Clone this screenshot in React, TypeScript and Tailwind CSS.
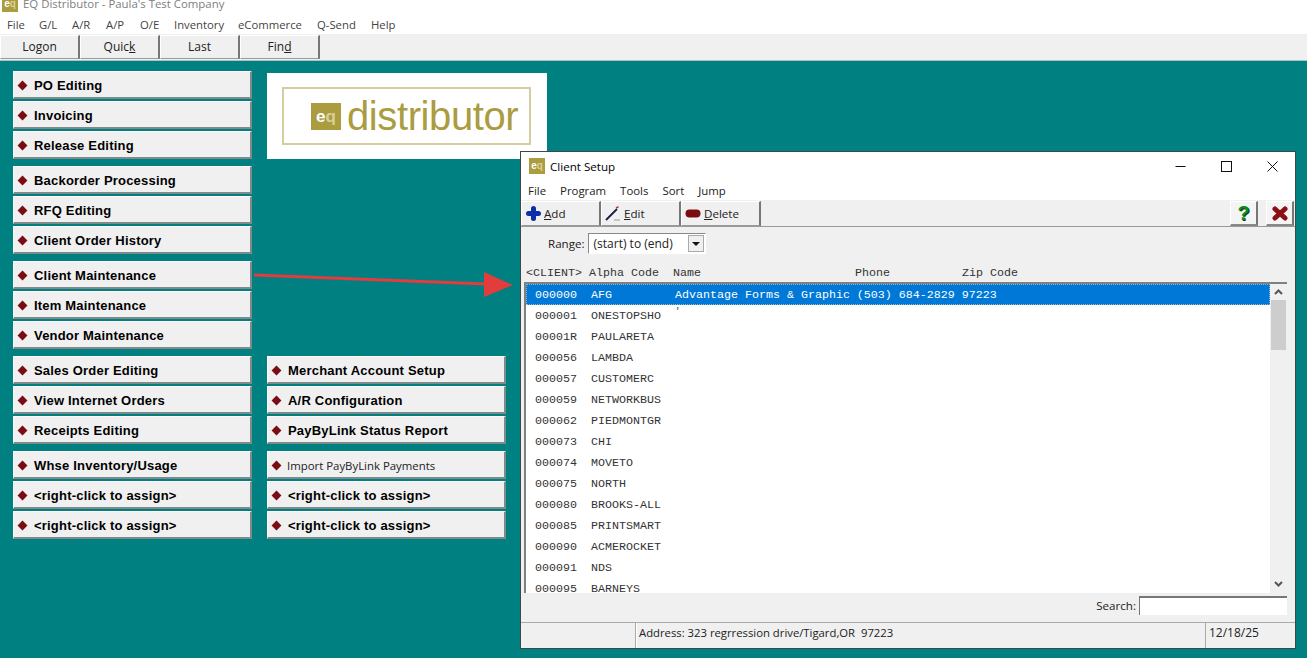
import React from 'react';

const menus = [
  ['File', 7], ['G/L', 39], ['A/R', 72], ['A/P', 106], ['O/E', 140],
  ['Inventory', 174], ['eCommerce', 238], ['Q-Send', 317], ['Help', 371],
] as const;

const leftGroups = [
  ['PO Editing', 'Invoicing', 'Release Editing'],
  ['Backorder Processing', 'RFQ Editing', 'Client Order History'],
  ['Client Maintenance', 'Item Maintenance', 'Vendor Maintenance'],
  ['Sales Order Editing', 'View Internet Orders', 'Receipts Editing'],
  ['Whse Inventory/Usage', '<right-click to assign>', '<right-click to assign>'],
];

const rows = [
  ['000001', 'ONESTOPSHO'], ['00001R', 'PAULARETA'], ['000056', 'LAMBDA'], ['000057', 'CUSTOMERC'],
  ['000059', 'NETWORKBUS'], ['000062', 'PIEDMONTGR'], ['000073', 'CHI'], ['000074', 'MOVETO'],
  ['000075', 'NORTH'], ['000080', 'BROOKS-ALL'], ['000085', 'PRINTSMART'], ['000090', 'ACMEROCKET'],
  ['000091', 'NDS'], ['000095', 'BARNEYS'],
];

const ui = "font-['Open_Sans','Noto_Sans',sans-serif]";

function EqMark({ className }: { className: string }) {
  return (
    <span className={`flex items-center justify-center bg-[#aa9c3f] font-['Liberation_Sans',sans-serif] font-bold leading-none ${className}`}>
      <span className="text-white">e</span>
      <span className="text-[#d8d09c]">q</span>
    </span>
  );
}

function NavButton({ label, thin }: { label: string; thin?: boolean }) {
  return (
    <button className="flex h-[28px] w-[239px] items-center border-t border-l border-white border-r-2 border-b-2 border-r-[#7f8a8a] border-b-[#7f8a8a] bg-[#f0f0f0] pl-[5px] pt-[2px] text-left">
      <span className="h-[7px] w-[7px] shrink-0 rotate-45 bg-[#7a0c12]" />
      {thin ? (
        <span className={`ml-[7px] text-[11.4px] text-[#222] ${ui}`}>{label}</span>
      ) : (
        <span className="ml-[8px] font-['Liberation_Sans',sans-serif] text-[13px] font-bold tracking-[0.2px] text-black">{label}</span>
      )}
    </button>
  );
}

function Group({ labels, thin }: { labels: string[]; thin?: string }) {
  return (
    <div className="flex flex-col gap-[2px]">
      {labels.map((l, i) => <NavButton key={i} label={l} thin={l === thin} />)}
    </div>
  );
}

function TopButton({ children }: { children: React.ReactNode }) {
  return (
    <button className={`flex h-[24px] w-[80px] items-center justify-center border-t border-l border-white border-r-2 border-b border-r-[#777] border-b-[#999] bg-[#f0f0f0] text-[12px] text-[#222] ${ui}`}>
      {children}
    </button>
  );
}

function ToolButton({ icon, children }: { icon: React.ReactNode; children: React.ReactNode }) {
  return (
    <button className={`flex h-[25px] w-[80px] items-center border-t border-l border-white border-r-2 border-b border-r-[#777] border-b-[#999] bg-[#f0f0f0] pl-[1px] text-[11.6px] text-[#222] ${ui}`}>
      <span className="flex w-[20px] justify-center">{icon}</span>
      <span className="ml-[1px]">{children}</span>
    </button>
  );
}

export default function App() {
  return (
    <div className="relative h-[658px] w-[1307px] overflow-hidden bg-[#008080]">
      {/* main app chrome */}
      <div className="h-[12px] overflow-hidden bg-white">
        <div className="-mt-[4px] flex items-center pl-[2px]">
          <EqMark className="h-[16px] w-[16px] text-[10px]" />
          <span className={`ml-[5px] text-[11.4px] leading-[16px] text-[#808080] ${ui}`}>EQ Distributor - Paula's Test Company</span>
        </div>
      </div>
      <div className={`relative h-[22px] bg-white text-[11.3px] leading-[26px] text-[#444] ${ui}`}>
        {menus.map(([m, x]) => (
          <span key={m} className="absolute top-0" style={{ left: x }}>{m}</span>
        ))}
      </div>
      <div className="h-[27px] border-b border-b-[#a9c4c4] bg-[#f0f0f0] pt-[1px]">
        <div className="flex">
          <TopButton>Logon</TopButton>
          <TopButton>Quic<u>k</u></TopButton>
          <TopButton>Last</TopButton>
          <TopButton>Fin<u>d</u></TopButton>
        </div>
      </div>

      {/* launcher buttons */}
      <div className="flex gap-[15px] pl-[13px] pt-[10px]">
        <div className="flex flex-col gap-[7px]">
          {leftGroups.map((g, i) => <Group key={i} labels={g} />)}
        </div>
        <div className="flex flex-col">
          <div className="mt-[2px] flex h-[86px] w-[280px] items-center bg-white pl-[15px]">
            <div className="flex h-[58px] w-[249px] items-center border-2 border-[#d3cd9f] pl-[27px]">
              <EqMark className="h-[27px] w-[30px] text-[17px]" />
              <span className="ml-[6px] font-['Liberation_Sans',sans-serif] text-[40px] leading-none tracking-[-0.4px] text-[#aa9c3f]">distributor</span>
            </div>
          </div>
          <div className="mt-[197px] flex flex-col gap-[7px]">
            <Group labels={['Merchant Account Setup', 'A/R Configuration', 'PayByLink Status Report']} />
            <Group labels={['Import PayByLink Payments', '<right-click to assign>', '<right-click to assign>']} thin="Import PayByLink Payments" />
          </div>
        </div>
      </div>

      {/* annotation arrow */}
      <svg className="absolute left-[250px] top-[265px]" width="270" height="36" viewBox="0 0 270 36">
        <path d="M4 10 L236 19" stroke="#e23c3c" strokeWidth="3" fill="none" />
        <path d="M234 7 L263 20 L234 32 Z" fill="#e23c3c" />
      </svg>

      {/* client setup window */}
      <div className={`absolute left-[520px] top-[151px] flex h-[498px] w-[776px] flex-col border border-[#3a4a4a] bg-[#f0f0f0] text-[#222] ${ui}`}>
        <div className="flex h-[28px] items-center bg-white pl-[8px]">
          <EqMark className="h-[16px] w-[16px] text-[10px]" />
          <span className="ml-[5px] mt-[2px] text-[11.6px] text-black">Client Setup</span>
          <div className="ml-auto flex">
            <svg className="mr-[35px]" width="11" height="11" viewBox="0 0 11 11"><path d="M0.5 5.5H10.5" stroke="#111" /></svg>
            <svg className="mr-[35px]" width="11" height="11" viewBox="0 0 11 11"><rect x="0.5" y="0.5" width="10" height="10" fill="none" stroke="#111" /></svg>
            <svg className="mr-[17px]" width="11" height="11" viewBox="0 0 11 11"><path d="M0.5 0.5L10.5 10.5M10.5 0.5L0.5 10.5" stroke="#111" /></svg>
          </div>
        </div>
        <div className="flex h-[20px] items-center gap-[14px] bg-white pl-[7px] pt-[2px] text-[11.4px]">
          <span>File</span><span>Program</span><span>Tools</span><span>Sort</span><span>Jump</span>
        </div>
        <div className="flex h-[27px] border-b border-b-[#999] pt-[1px]">
          <ToolButton icon={
            <svg width="15" height="15" viewBox="0 0 15 15"><path d="M2.5 7.5H12.5M7.5 2.5V12.5" stroke="#0b2fa8" strokeWidth="5" strokeLinecap="round" /></svg>
          }><u>A</u>dd</ToolButton>
          <ToolButton icon={
            <svg width="16" height="15" viewBox="0 0 16 15"><path d="M1 14L12 3" stroke="#161a4a" strokeWidth="1.8" /><path d="M11 2L13.5 0.8" stroke="#c33" strokeWidth="1.5" /><path d="M9 14H15" stroke="#999" /></svg>
          }><u>E</u>dit</ToolButton>
          <ToolButton icon={
            <svg width="16" height="9" viewBox="0 0 16 9"><rect x="0.5" y="0.5" width="15" height="8" rx="4" fill="#7a0c12" /></svg>
          }><u>D</u>elete</ToolButton>
          <div className="ml-auto mr-[1px] flex gap-[8px]">
            <button className="flex h-[25px] w-[28px] items-center justify-center border-t border-l border-white border-r-2 border-b-2 border-r-[#777] border-b-[#888] bg-[#f4f4f4] font-['Liberation_Sans',sans-serif] text-[20px] font-black text-[#0f8a1f] [text-shadow:1px_1px_0_#0b3d14]">?</button>
            <button className="flex h-[25px] w-[28px] items-center justify-center border-t border-l border-white border-r-2 border-b-2 border-r-[#777] border-b-[#888] bg-[#f4f4f4]">
              <svg width="16" height="15" viewBox="0 0 16 15"><path d="M3 3L13 12M13 3L3 12" stroke="#8c0f14" strokeWidth="5" strokeLinecap="round" /></svg>
            </button>
          </div>
        </div>
        <div className="flex h-[33px] items-center pl-[27px] text-[11.6px]">
          <span>Range:</span>
          <div className="ml-[3px] flex h-[21px] w-[118px] items-center justify-between border border-[#888] border-r-white border-b-white bg-white pl-[5px] pr-[1px] text-[12px]">
            <span>(start) to (end)</span>
            <span className="flex h-[17px] w-[16px] items-center justify-center border border-[#aaa] bg-[#f0f0f0]">
              <svg width="8" height="4" viewBox="0 0 8 4"><path d="M0 0H8L4 4Z" fill="#111" /></svg>
            </span>
          </div>
        </div>
        <div className="flex h-[22px] items-end pb-[2px] pl-[5px] font-['Liberation_Mono',monospace] text-[11.67px] leading-[14px] text-[#333]">
          <span className="w-[63px]">&lt;CLIENT&gt;</span>
          <span className="w-[84px]">Alpha Code</span>
          <span className="w-[182px]">Name</span>
          <span className="w-[107px]">Phone</span>
          <span>Zip Code</span>
        </div>
        <div className="ml-[3px] flex h-[311px] w-[763px] border-t-2 border-l-2 border-t-[#808080] border-l-[#808080] bg-white">
          <div className="min-w-0 flex-1 overflow-hidden font-['Liberation_Mono',monospace] text-[11.67px] text-[#333]">
            <div className="flex h-[21px] items-center border border-dotted border-[#9bb] bg-[#0078d7] pl-[8px] pt-[2px] text-white">
              <span className="w-[56px]">000000</span>
              <span className="w-[84px]">AFG</span>
              <span className="whitespace-pre">Advantage Forms &amp; Graphic (503) 684-2829 97223</span>
            </div>
            {rows.map(([id, alpha], i) => (
              <div key={id} className="flex h-[21px] items-center pl-[9px] pt-[2px]">
                <span className="w-[56px]">{id}</span>
                <span className="w-[84px]">{alpha}</span>
                {i === 0 && <span className="-mt-[8px] text-[9px]">'</span>}
              </div>
            ))}
          </div>
          <div className="flex w-[17px] flex-col items-center bg-[#f0f0f0]">
            <svg className="mt-[5px] mb-[5px]" width="9" height="6" viewBox="0 0 9 6"><path d="M1 5L4.5 1.5L8 5" stroke="#555" strokeWidth="2" fill="none" /></svg>
            <div className="h-[50px] w-[15px] bg-[#cdcdcd]" />
            <svg className="mt-auto mb-[6px]" width="9" height="6" viewBox="0 0 9 6"><path d="M1 1L4.5 4.5L8 1" stroke="#555" strokeWidth="2" fill="none" /></svg>
          </div>
        </div>
        <div className="flex h-[29px] items-center justify-end pb-[4px] pr-[8px] text-[11.6px]">
          <span>Search:</span>
          <div className="ml-[3px] h-[19px] w-[148px] border-t-2 border-l border-t-[#777] border-l-[#777] bg-white" />
        </div>
        <div className="flex flex-1 border-t border-t-[#aaa] text-[11.3px]">
          <div className="w-[115px] border-r border-r-[#aaa]" />
          <div className="w-[567px] border-l border-l-white pl-[2px] pt-[2px]">Address: 323 regrression drive/Tigard,OR&nbsp;&nbsp;97223</div>
          <div className="ml-[2px] flex-1 border-l border-l-[#aaa] pl-[3px] pt-[1px] text-[12px]">12/18/25</div>
        </div>
      </div>
    </div>
  );
}
